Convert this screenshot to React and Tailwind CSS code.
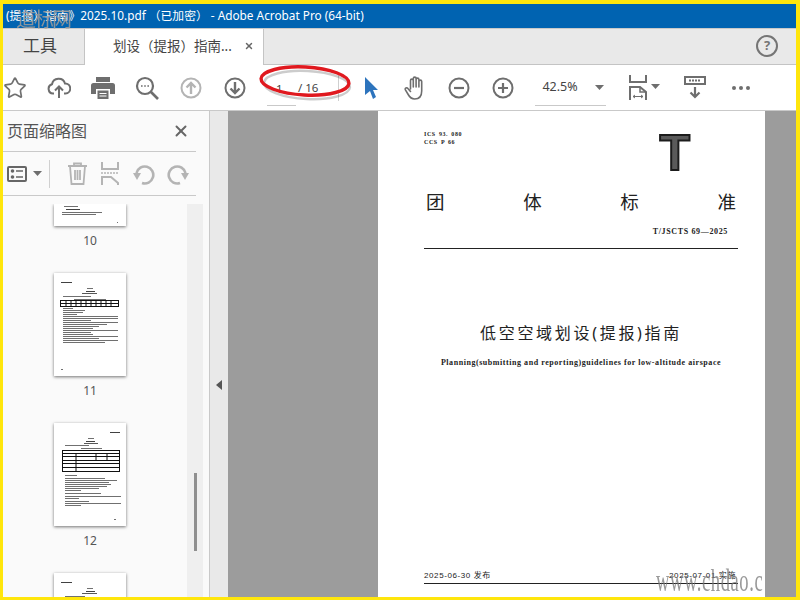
import { Star, X } from 'lucide-react'

const cjk = 'font-["Noto_Sans","Noto_Sans_CJK_SC",sans-serif]'
const serifCjk = 'font-["Liberation_Serif","Noto_Sans_CJK_SC",serif]'

function Caret({ className = '' }) {
    return (
        <svg width="9" height="5" viewBox="0 0 9 5" className={className}>
            <path d="M0 0h9L4.5 5z" fill="#6e6e6e" />
        </svg>
    )
}

function ToolIcon({ children, w = 24, h = 24, view = '0 0 24 24', color = '#6e6e6e' }) {
    return (
        <svg width={w} height={h} viewBox={view} fill="none" stroke={color} strokeWidth="2">
            {children}
        </svg>
    )
}

function Lines({ rows }) {
    return rows.map(([x, y, w, h = 1, o = 0.6], i) => (
        <rect key={i} x={x} y={y} width={w} height={h} fill="#111" opacity={o} />
    ))
}

const headRows = [[7, 9, 11, 1, 0.8], [33, 15, 6], [32, 18, 9, 1, 0.8], [28, 20, 15, 1, 0.7]]

const bodyRows = [
    [9, 23, 28], [20, 26, 32], [9, 35, 10], [9, 37, 22], [9, 39, 20], [9, 41, 14],
    [9, 43, 55], [9, 45, 55], [9, 47, 28], [9, 49, 55], [9, 51, 44], [9, 53, 36],
    [9, 55, 30], [9, 57, 55], [9, 59, 28], [9, 61, 30], [9, 63, 55], [9, 65, 36],
    [9, 67, 55], [9, 69, 42], [7, 96, 2],
]

const bodyRows12 = [
    [11, 52, 12], [11, 55, 40], [11, 57, 52], [11, 59, 44], [11, 61, 46], [11, 63, 42],
    [11, 65, 34], [11, 67, 16], [11, 70, 36], [11, 73, 56], [11, 75, 14], [11, 78, 24],
    [11, 80, 56], [11, 82, 16], [60, 96, 2],
]

function Thumb({ page, clip = 'h-[103px]' }) {
    return (
        <div className={`w-[72px] ${clip} bg-white shadow-[0_1px_3px_rgba(0,0,0,0.55)] overflow-hidden flex ${clip === 'h-[22px]' ? 'items-end' : 'items-start'}`}>
            <svg width="72" height="103" viewBox="0 0 72 103" className="shrink-0 blur-[0.35px]">
                {page === 10 && <Lines rows={[[10, 83, 14], [12, 86, 14, 1, 0.8], [8, 89, 40], [8, 91, 34], [63, 99, 1]]} />}
                {page === 11 && (
                    <g>
                        <Lines rows={headRows} />
                        <Lines rows={bodyRows} />
                        <rect x="6.5" y="27.5" width="58" height="6" stroke="#111" fill="none" />
                        <path d="M6 30.5h59M12 28v6M17 28v6M22 28v6M27 28v6M32 28v6M37 28v6M42 28v6M47 28v6M52 28v6M57 28v6" stroke="#111" strokeWidth="1" />
                    </g>
                )}
                {page === 12 && (
                    <g>
                        <Lines rows={[[56, 9, 10, 1, 0.8], [34, 15, 6], [32, 18, 9, 1, 0.8], [30, 20, 14, 1, 0.7], [11, 22, 24], [27, 25, 21]]} />
                        <Lines rows={bodyRows12} />
                        <rect x="8.5" y="27.5" width="57" height="21" stroke="#111" fill="none" />
                        <path d="M8 30.5h58M8 33.5h58M8 37.5h58M8 40.5h58M8 44.5h58M22 31v18M42 31v6M53 31v6" stroke="#111" strokeWidth="1" />
                    </g>
                )}
                {page === 13 && <Lines rows={headRows.concat([[11, 23, 20]])} />}
            </svg>
        </div>
    )
}

function ThumbLabel({ children }) {
    return <div className={`h-[47px] w-[72px] pt-[6px] text-center text-[12px] leading-[18px] text-[#555] ${cjk}`}>{children}</div>
}

export default function App() {
    return (
        <div className={`relative w-[800px] h-[600px] overflow-hidden bg-white border-t-4 border-b-[3px] border-l-[3px] border-r-[4px] border-[#ffe60c] flex flex-col ${cjk}`}>
            {/* title bar */}
            <div className="h-6 shrink-0 bg-[#0063b1] pl-[3px] text-[11.800px] leading-[22px] text-white whitespace-nowrap">
                (提报）指南》2025.10.pdf （已加密） - Adobe Acrobat Pro (64-bit)
            </div>

            {/* tabs */}
            <div className="h-[37px] shrink-0 bg-[#e9e9e9] border-t border-[#c9c9c9] flex items-stretch">
                <div className="w-[81px] border-b border-[#c4c4c4] pl-5 text-[17px] leading-[33px] text-[#444]">工具</div>
                <div className="w-[180px] bg-white border-x border-[#c4c4c4] flex items-center pl-[28px] pb-[2px] text-[13.500px] text-[#444]">
                    <span className="whitespace-nowrap">划设（提报）指南...</span>
                    <X size={10} strokeWidth={3.5} className="ml-[12px] text-[#666]" />
                </div>
                <div className="flex-1 border-b border-[#c4c4c4] flex justify-end items-center pr-[18px] pb-[2px]">
                    <div className="w-[22px] h-[22px] rounded-full border-2 border-[#757575] flex items-center justify-center text-[13px] font-bold leading-none text-[#757575]">?</div>
                </div>
            </div>

            {/* toolbar */}
            <div className="h-[46px] shrink-0 bg-white border-b border-[#c9c9c9] flex items-center text-[#6e6e6e]">
                <div className="w-[24px] flex justify-center"><Star size={24} strokeWidth={1.7} className="text-[#707070]" /></div>
                <div className="ml-[10px] w-[44px] flex justify-center">
                    <ToolIcon>
                        <path d="M7 17.5H6A4.7 4.7 0 0 1 5 8.3 6.7 6.7 0 0 1 18 7.5a5 5 0 0 1 .5 10H17" />
                        <path d="M12 22V11M8 14.5l4-4 4 4" />
                    </ToolIcon>
                </div>
                <div className="w-[44px] flex justify-center">
                    <svg width="24" height="22" viewBox="0 0 24 22" fill="#6e6e6e">
                        <path d="M5 0h14v5H5z" />
                        <path d="M2.5 6h19A2.500 2.500 0 0 1 24 8.500V17h-5v-5H5v5H0V8.500A2.500 2.500 0 0 1 2.500 6z" />
                        <path d="M6.500 13.500h11V22h-11z" />
                        <path d="M8.500 16h7v1h-7zM8.500 18.500h7v1h-7z" fill="#fff" />
                    </svg>
                </div>
                <div className="w-[44px] flex justify-center">
                    <ToolIcon w={24} h={24}>
                        <circle cx="10" cy="10" r="8" strokeWidth="2.2" />
                        <path d="M16 16l7 7" strokeWidth="2.6" />
                        <path d="M6 10h1.600M9.200 10h1.600M12.400 10H14" strokeWidth="1.600" />
                    </ToolIcon>
                </div>
                <div className="w-[44px] flex justify-center">
                    <ToolIcon w={22} h={22} view="0 0 22 22" color="#b4b4b4">
                        <circle cx="11" cy="11" r="9.500" />
                        <path d="M11 17V6M6.500 10.500L11 6l4.500 4.500" strokeWidth="2.400" />
                    </ToolIcon>
                </div>
                <div className="w-[44px] flex justify-center">
                    <ToolIcon w={22} h={22} view="0 0 22 22">
                        <circle cx="11" cy="11" r="9.500" />
                        <path d="M11 5v11M6.500 11.500L11 16l4.500-4.500" strokeWidth="2.400" />
                    </ToolIcon>
                </div>
                <div className="ml-[10px] w-[29px] h-[30px] mt-[7px] border-b border-[#c9c9c9] text-[11.500px] leading-[26px] text-[#444] pl-[9px]">1</div>
                <span className="ml-[2px] text-[11.500px] text-[#444]">/ 16</span>
                <div className="ml-[20px] w-px h-[26px] bg-[#cfcfcf]"></div>
                <div className="ml-[22px] w-[20px] flex justify-center">
                    <svg width="14" height="22" viewBox="0 0 14 22"><path d="M1 0l13 13H9l3 7-3 2-3-8-5 4z" fill="#2d74bd" /></svg>
                </div>
                <div className="ml-[22px] w-[24px] flex justify-center">
                    <svg width="23" height="24" viewBox="0 0 23 24" fill="none" stroke="#6e6e6e" strokeWidth="1.600" strokeLinejoin="round" strokeLinecap="round">
                        <path d="M6.500 13V4.500a1.400 1.400 0 0 1 2.800 0V11M9.300 10V2.500a1.400 1.400 0 0 1 2.800 0V11M12.100 10V3.500a1.400 1.400 0 0 1 2.800 0V11M14.900 11V5.500a1.400 1.400 0 0 1 2.800 0V15c0 5-2.500 8-7 8-3.500 0-5-1.700-6.500-4.500L1.400 13.800c-.8-1.700 1.400-2.800 2.500-1.400l2.600 3" />
                    </svg>
                </div>
                <div className="ml-[21px] w-[22px] flex justify-center">
                    <ToolIcon w={22} h={22} view="0 0 22 22">
                        <circle cx="11" cy="11" r="9.500" />
                        <path d="M6 11h10" strokeWidth="2.200" />
                    </ToolIcon>
                </div>
                <div className="ml-[22px] w-[22px] flex justify-center">
                    <ToolIcon w={22} h={22} view="0 0 22 22">
                        <circle cx="11" cy="11" r="9.500" />
                        <path d="M6 11h10M11 6v10" strokeWidth="2.200" />
                    </ToolIcon>
                </div>
                <div className="ml-[21px] w-[71px] h-[30px] mt-[7px] border-b border-[#c9c9c9] flex items-center pl-[7px] pb-[6px] text-[12.5px] text-[#444]">
                    42.5%
                    <Caret className="ml-[17px]" />
                </div>
                <div className="ml-[23px] flex items-center">
                    <svg width="18" height="25" viewBox="0 0 18 25" fill="none" stroke="#6e6e6e" strokeWidth="2">
                        <path d="M1 0v7h16V0" />
                        <path d="M1 25V12h10l6 5v8" />
                        <path d="M11 12v5h6" strokeWidth="1.500" />
                        <path d="M4 21.500h10M4 21.500l2-1.500M4 21.500L6 23M14 21.500L12 20M14 21.500L12 23" strokeWidth="1" />
                    </svg>
                    <Caret className="ml-[4px] mb-[3px]" />
                </div>
                <div className="ml-[24px] w-[22px]">
                    <svg width="22" height="23" viewBox="0 0 22 23" fill="none" stroke="#6e6e6e">
                        <rect x="1" y="1" width="20" height="7" strokeWidth="2" />
                        <path d="M5 4.500h12" strokeWidth="2" strokeDasharray="2 1" />
                        <path d="M11 11v10M6.500 16.500L11 21l4.500-4.500" strokeWidth="2.200" />
                    </svg>
                </div>
                <div className="ml-[26px] flex gap-[3px]">
                    <span className="w-[4px] h-[4px] rounded-full bg-[#6e6e6e]"></span>
                    <span className="w-[4px] h-[4px] rounded-full bg-[#6e6e6e]"></span>
                    <span className="w-[4px] h-[4px] rounded-full bg-[#6e6e6e]"></span>
                </div>
            </div>

            <div className="flex-1 min-h-0 flex">
                {/* thumbnails panel */}
                <div className="w-[207px] shrink-0 bg-[#fafafa] border-r border-[#c9c9c9] flex flex-col">
                    <div className="w-[193px] h-[41px] shrink-0 border-b border-[#c9c9c9] flex items-center justify-between pl-[4px] pr-[6px] text-[16px] text-[#555]">
                        页面缩略图
                        <X size={18} strokeWidth={2.6} className="text-[#666]" />
                    </div>
                    <div className="w-[193px] h-[44px] shrink-0 border-b border-[#c9c9c9] flex items-center pl-[4px]">
                        <svg width="20" height="16" viewBox="0 0 20 16" fill="none">
                            <rect x="1" y="1" width="18" height="14" rx="1" stroke="#666" strokeWidth="2" />
                            <circle cx="5.500" cy="5" r="1.800" fill="#666" />
                            <circle cx="5.500" cy="11" r="1.800" fill="#666" />
                            <path d="M9 5h7M9 11h7" stroke="#666" strokeWidth="1.600" />
                        </svg>
                        <Caret className="ml-[6px]" />
                        <div className="ml-[7px] w-px h-[28px] bg-[#d0d0d0]"></div>
                        <div className="ml-[17px]">
                            <svg width="21" height="23" viewBox="0 0 21 23" fill="none" stroke="#b4b4b4" strokeWidth="1.800">
                                <path d="M1 4h19M7 4V1.500h7V4M3 4l1.500 18h12L18 4M8 8v10M10.500 8v10M13 8v10" />
                            </svg>
                        </div>
                        <div className="ml-[13px]">
                            <svg width="18" height="23" viewBox="0 0 18 23" fill="none" stroke="#b4b4b4" strokeWidth="2">
                                <path d="M1 0v7h16V0" />
                                <path d="M0 11h18" strokeDasharray="2 1" strokeWidth="1.500" />
                                <path d="M1 23V15h9l7 6v2" />
                            </svg>
                        </div>
                        <div className="ml-[14px]">
                            <svg width="22" height="22" viewBox="0 0 22 22" fill="none" stroke="#b4b4b4" strokeWidth="2.600">
                                <path d="M3.500 10A8.500 8.500 0 1 1 9 20" />
                                <path d="M0 10h8l-4 7z" fill="#b4b4b4" stroke="none" />
                            </svg>
                        </div>
                        <div className="ml-[12px]">
                            <svg width="22" height="22" viewBox="0 0 22 22" fill="none" stroke="#b4b4b4" strokeWidth="2.600">
                                <path d="M18.500 10A8.500 8.500 0 1 0 13 20" />
                                <path d="M22 10h-8l4 7z" fill="#b4b4b4" stroke="none" />
                            </svg>
                        </div>
                    </div>
                    <div className="flex-1 min-h-0 pt-[8px] flex">
                        <div className="w-[184px] overflow-hidden pl-[51px]">
                            <Thumb page={10} clip="h-[22px]" />
                            <ThumbLabel>10</ThumbLabel>
                            <Thumb page={11} />
                            <ThumbLabel>11</ThumbLabel>
                            <Thumb page={12} />
                            <ThumbLabel>12</ThumbLabel>
                            <Thumb page={13} />
                        </div>
                        <div className="w-[16px] bg-[#efefef] flex justify-center pt-[269px]">
                            <div className="w-[3px] h-[78px] bg-[#8f8f8f]"></div>
                        </div>
                    </div>
                </div>

                {/* collapse strip */}
                <div className="w-[18px] shrink-0 bg-[#e9e9e9] flex items-center justify-center pt-[62px]">
                    <svg width="6" height="10" viewBox="0 0 6 10"><path d="M6 0v10L0 5z" fill="#555" /></svg>
                </div>

                {/* document */}
                <div className="flex-1 bg-[#9c9c9c] pl-[150px] pr-[31px]">
                    <div className={`h-full bg-white flex flex-col pl-[46px] pr-[27px] text-[#222] ${serifCjk}`}>
                        <div className="h-[78px] flex justify-between">
                            <div className="pt-[19px] text-[6px] leading-[8px] font-bold tracking-[0.6px] [word-spacing:1px]">
                                <div>ICS 93. 080</div>
                                <div>CCS P 66</div>
                            </div>
                            <div className="pr-[48px] pt-[12px] font-['Liberation_Sans',sans-serif] font-bold text-[50px] leading-[60px] text-[#5a5a5a] [-webkit-text-stroke:2px_#1c1c1c]">T</div>
                        </div>
                        <div className={`h-[28px] flex justify-between pl-[2px] pr-[2px] text-[18.500px] leading-[26px] text-[#222] ${cjk}`}>
                            <span>团</span><span>体</span><span>标</span><span>准</span>
                        </div>
                        <div className="mt-[9px] h-[23px] border-b border-[#222] pr-[10px] text-right text-[8px] font-bold tracking-[0.65px]">T/JSCTS 69—2025</div>
                        <div className={`mt-[72px] text-center text-[16px] leading-[24px] tracking-[2.700px] text-[#222] ${cjk}`}>低空空域划设(提报)指南</div>
                        <div className="mt-[12px] text-center text-[8px] leading-[12px] font-bold tracking-[0.55px] whitespace-nowrap">Planning(submitting and reporting)guidelines for low-altitude airspace</div>
                        <div className="mt-auto mb-[13px] flex justify-between border-b border-[#222] pr-[2px] pb-[2px] text-[8px] leading-[11px] font-['Liberation_Sans','Noto_Sans_CJK_SC',sans-serif] tracking-[0.6px]">
                            <span>2025-06-30 发布</span>
                            <span>2025-07-01 实施</span>
                        </div>
                    </div>
                </div>
            </div>

            {/* overlays baked into the screenshot */}
            <svg width="100" height="46" viewBox="0 0 100 46" className="absolute left-[252px] top-[56px] pointer-events-none">
                <ellipse cx="50" cy="22" rx="43" ry="14" fill="none" stroke="#000" strokeOpacity="0.2" strokeWidth="2.500" transform="translate(2 3) rotate(3 50 22)" />
                <ellipse cx="50" cy="21" rx="44" ry="14" fill="none" stroke="#e0191f" strokeWidth="3.400" transform="rotate(3 50 21)" />
            </svg>
            <div className="absolute left-[13px] top-[3px] text-[20px] leading-[24px] tracking-[-2px] text-[#9a9a9a] opacity-90 font-['Noto_Sans_CJK_SC',sans-serif] pointer-events-none">道标网</div>
            <div className="absolute left-[653px] top-[559px] origin-left scale-x-[0.58] text-[32px] leading-[34px] text-[#777] opacity-75 tracking-[1px] whitespace-nowrap font-['Liberation_Serif',serif] pointer-events-none">www.chdao.c</div>
        </div>
    )
}
